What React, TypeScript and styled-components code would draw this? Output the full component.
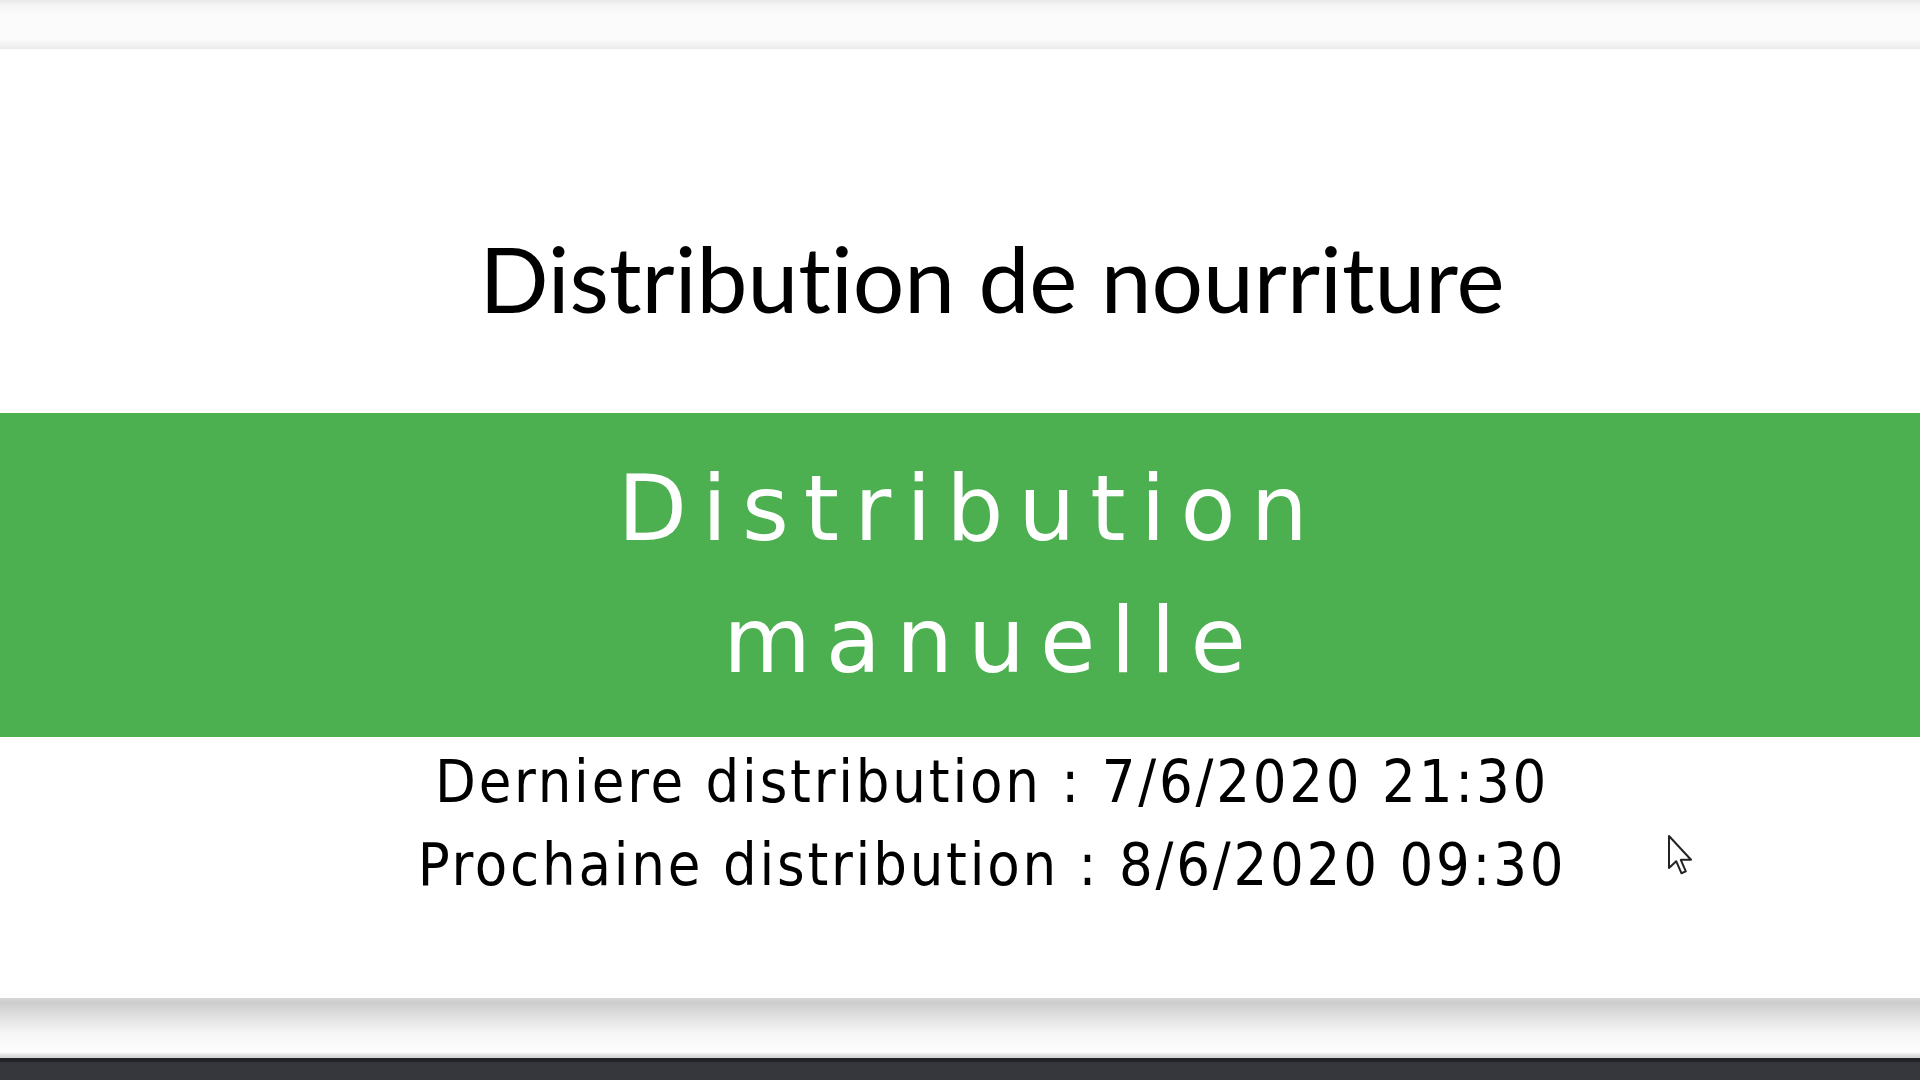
import styled, { createGlobalStyle } from "styled-components"

const GlobalStyle = createGlobalStyle`
  html, body {
    margin: 0;
    padding: 0;
    background: #fafafa;
    overflow: hidden;
  }
`

const Page = styled.div`
  width: 1920px;
  height: 1080px;
  display: flex;
  flex-direction: column;
  position: relative;
  overflow: hidden;
`

const TopBand = styled.div`
  height: 49px;
  flex: none;
  background: linear-gradient(#e8e8e8 0%, #f6f6f6 12%, #fbfbfb 30%, #fbfbfb 80%, #efefef 95%, #e9e9e9 100%);
`

const Card = styled.section`
  height: 949px;
  flex: none;
  background: #ffffff;
  display: flex;
  flex-direction: column;
`

const Header = styled.div`
  height: 364px;
  box-sizing: border-box;
  padding: 183px 0 0 64px;
  text-align: center;
`

const Title = styled.h1`
  margin: 0;
  font-family: Lato, "Open Sans", sans-serif;
  font-weight: 400;
  font-size: 91px;
  line-height: 1;
  font-variant-ligatures: none;
  color: #000;
`

const ManualButton = styled.button`
  height: 324px;
  flex: none;
  border: none;
  background: #4caf50;
  display: flex;
  align-items: center;
  justify-content: center;
  padding: 0 0 0 64px;
  cursor: pointer;
`

const ButtonLabel = styled.span`
  max-width: 800px;
  font-family: "DejaVu Sans", Verdana, sans-serif;
  font-size: 90px;
  line-height: 132px;
  letter-spacing: 15px;
  white-space: break-spaces;
  color: #ffffff;
  text-align: center;
`

const Info = styled.div`
  padding: 3px 0 0 64px;
  text-align: center;
`

const InfoLine = styled.p`
  margin: 0;
  font-family: "DejaVu Sans Condensed", "DejaVu Sans", sans-serif;
  font-stretch: condensed;
  font-size: 59px;
  line-height: 83px;
  letter-spacing: 2.8px;
  color: #000;
`

const BottomShadow = styled.div`
  height: 60px;
  flex: none;
  background: linear-gradient(#d6d6d6 0%, #cdcdcd 8%, #e4e4e4 35%, #f6f6f6 60%, #fdfdfd 90%, #d8d8d8 97%);
`

const Footer = styled.div`
  flex: 1;
  background: #36373c;
  border-top: 4px solid #222326;
`

const Cursor = styled.svg`
  position: absolute;
  left: 1667px;
  top: 834px;
`

export default function App() {
  return (
    <>
      <GlobalStyle />
      <Page>
        <TopBand />
        <Card>
          <Header>
            <Title>Distribution de nourriture</Title>
          </Header>
          <ManualButton>
            <ButtonLabel>Distribution manuelle</ButtonLabel>
          </ManualButton>
          <Info>
            <InfoLine>Derniere distribution : 7/6/2020 21:30</InfoLine>
            <InfoLine>Prochaine distribution : 8/6/2020 09:30</InfoLine>
          </Info>
        </Card>
        <BottomShadow />
        <Footer />
        <Cursor width="28" height="44" viewBox="0 0 14 22">
          <path
            d="M1 1 L1 17 L4.6 13.6 L7.2 19.6 L9.4 18.7 L6.9 12.9 L12 12.9 Z"
            fill="#fff"
            stroke="#222"
            strokeWidth="1"
            strokeLinejoin="round"
          />
        </Cursor>
      </Page>
    </>
  )
}
